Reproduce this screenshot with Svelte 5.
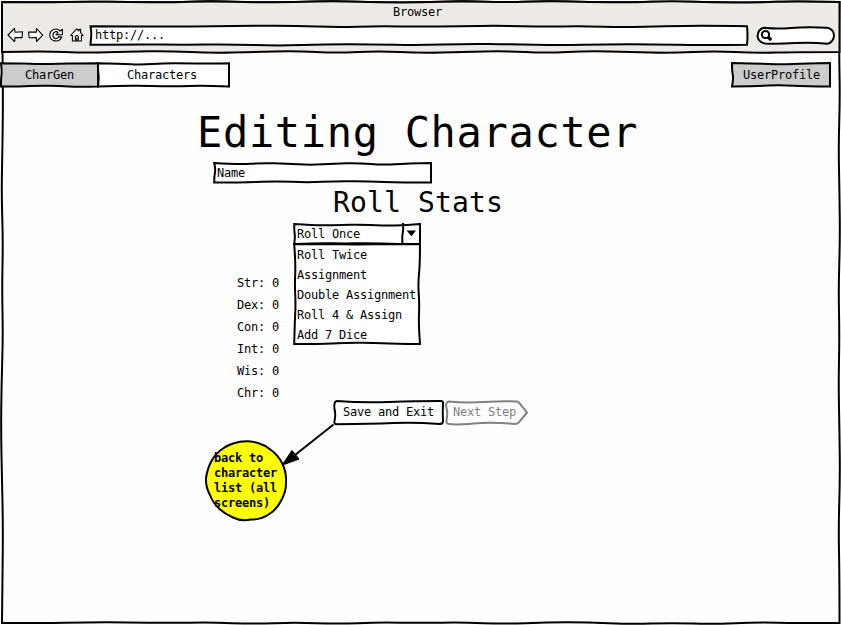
<script>
  // Smooth hand-drawn line: offsets are pushed perpendicular to the segment.
  function side(x1, y1, x2, y2, offsets) {
    const len = Math.hypot(x2 - x1, y2 - y1);
    const nx = -(y2 - y1) / len;
    const ny = (x2 - x1) / len;
    const n = offsets.length + 1;
    const pts = offsets.map((o, i) => {
      const t = (i + 1) / n;
      return [x1 + (x2 - x1) * t + nx * o, y1 + (y2 - y1) * t + ny * o];
    });
    let d = '';
    pts.forEach((p, i) => {
      const q = pts[i + 1];
      const end = q ? [(p[0] + q[0]) / 2, (p[1] + q[1]) / 2] : [x2, y2];
      d += `Q${p[0].toFixed(2)} ${p[1].toFixed(2)} ${end[0].toFixed(2)} ${end[1].toFixed(2)}`;
    });
    return d || `L${x2} ${y2}`;
  }

  function box(x1, y1, x2, y2, top, right, bottom, left) {
    return (
      `M${x1} ${y1}` +
      side(x1, y1, x2, y2 - (y2 - y1), top) +
      side(x2, y1, x2, y2, right) +
      side(x2, y2, x1, y2, bottom) +
      side(x1, y2, x1, y1, left) +
      'Z'
    );
  }

  const longTop = [0.5, -0.5, 0, 0.5, -1, 0.5, 0, -1, 0.5, 0.5, -1, 0.5, -1, 0, 0.5, -1, 0.5, 0.5, -1];
  const longBottom = [0, 0.7, -1, 0, -1, 0.7, 0.7, -1, 0.7, 0, 0.7, -1, 0.7, -1, 0.7, 0, 0.7, 0.7, 0];
  const windowPath = box(2, 2, 839.5, 623, longTop, [0.5, -0.5, 1, 0, -0.5, 1, 0, 1, 0, -0.5, 1, 0], longBottom, [0.5, 1, 0, -1, -0.5, 1, 0, 1, -0.5, 0.5, 1, 0.5]);
  const chromePath = box(2, 2, 839.5, 52, longTop, [0], [0, -1, 1, -1, 0, 1, -1, 1, 0, -1, 1, -1, 1, 0, -1, 1, 0.5, -1, 1], [0]);

  const options = ['Roll Twice', 'Assignment', 'Double Assignment', 'Roll 4 & Assign', 'Add 7 Dice'];
  const stats = ['Str', 'Dex', 'Con', 'Int', 'Wis', 'Chr'];
</script>

{#snippet frame(d, fill = '#fff', stroke = '#000')}
  <svg class="frame" aria-hidden="true"><path {d} {fill} {stroke} stroke-width="2" stroke-linejoin="miter" /></svg>
{/snippet}

<div class="window">
  {@render frame(windowPath, '#fefefe')}
  <header class="chrome">
    {@render frame(chromePath, '#eeebe6')}
    <div class="title">Browser</div>
    <div class="toolbar">
      <svg class="icons" width="82" height="20" viewBox="0 0 82 20" fill="#fff" stroke="#000" stroke-width="1.1" stroke-linejoin="round">
        <path d="M2 10 8.5 3.4 9 7.2 16.5 6.8 16 12.6 9 12.6 8.6 16.6Z" />
        <path d="M36.7 10.2 30.5 3.5 30.3 7.1 22.6 7.1 23.2 12.8 30.3 12.6 30.5 16.5Z" />
        <path d="M54.2 6.2C51 2 43.8 4.3 43.8 10.1C43.8 16.7 53 18.3 55.7 12L53 11.6C51 15.2 46.7 13.8 46.9 9.9C47.1 6.5 50.8 5.8 52.1 7.9L50.1 9.6 56.4 9.8 56.4 4.2Z" />
        <path d="M66.4 10V16H75.4V10M64.6 10.5 70.7 3.9 73 6V4.3H74.6V7.7L77.2 10.5H75.4M64.6 10.5H66.4M69.3 16V11.5Q70.8 9.5 72.3 11.5V16M70.8 12.8V16" />
      </svg>
      <div class="url">
        {@render frame(box(1.5, 1.2, 658, 19.8, [0, 0.5, 0, -0.5, -0.5, 1, 0, 0.5, 0, -0.5, 0.5, 0, 1, 0, -0.5], [-1], [-0.5, 0.5, 0.5, -0.5, 0.5, 1, -0.5, 0.5, 0.5, -1, 0.5, 0, 0.5], [0.5, 1]))}
        http://...
      </div>
      <div class="search">
        <svg class="frame" aria-hidden="true">
          <path d="M8 1.7Q20 3.2 35 2T71 1.7C75.5 2 78 6 78 9.5C78 13 75 17.5 71.5 17.7Q55 16 39 17T9 17.5Q2 16 1.5 10Q2 3 8 1.7Z" fill="#fff" stroke="#000" stroke-width="2" />
          <circle cx="9.5" cy="8.5" r="3.6" fill="#fff" stroke="#000" stroke-width="2" />
          <path d="M11.8 10.8 15.2 14" stroke="#000" stroke-width="3.2" />
        </svg>
      </div>
    </div>
  </header>

  <nav>
    <div class="tab chargen">
      {@render frame(box(1, 1.2, 98, 24.5, [0, 1, 0.5, 0], [0], [-0.5, 0.5, 1, 0], [0, 1]), '#ccc')}
      CharGen
    </div>
    <div class="tab characters">
      {@render frame(box(1, 1.2, 132, 24.5, [0.5, 1.5, 0, 0, 0.5], [0], [1, 0, 0.5, 1], [1, 0]))}
      Characters
    </div>
    <div class="tab profile">
      {@render frame(box(1, 1, 99, 24.5, [0.5, 1.5, 0.5], [0], [0, 1.5, 0.5], [1.5, 0]), '#ccc')}
      UserProfile
    </div>
  </nav>

  <main>
    <h1>Editing Character</h1>
    <div class="name">
      {@render frame(box(1.2, 1, 218, 20.5, [1.5, 0, 0.5, 2, 0.5, 0, 2, 0.5], [0], [0, 1, 1.5, 0, 1.5, 0], [0, 1.5]))}
      Name
    </div>
    <h2>Roll Stats</h2>
    <div class="roll">
      <ul class="stats">
        {#each stats as stat}
          <li>{stat}: 0</li>
        {/each}
      </ul>
      <div class="combo">
        <div class="selected">
          {@render frame(box(1.2, 1, 127, 21, [1.8, 0.5, 1, 2], [0], [0, 1, 0.5, 1], [1, 0]))}
          <span>Roll Once</span>
          <svg class="drop" width="20" height="22" viewBox="0 0 20 22">
            <path d="M2 0Q2.6 5 1.7 10T1.7 22" fill="none" stroke="#000" stroke-width="2" />
            <path d="M5.5 7.5H15L10.5 13.3Z" />
          </svg>
        </div>
        <div class="list">
          {@render frame(box(1.2, 1, 127, 101, [0, 0.5, 0], [0, 2, 0.5, 1.5], [0, 1.5, 1, 0], [0.5, 1.5, 0.5, 1.5]))}
          {#each options as option}
            <div class="option">{option}</div>
          {/each}
        </div>
      </div>
    </div>
    <div class="actions">
      <button class="save">
        {@render frame('M4 1Q28 3 56 2T108 1Q110.5 1 110 4Q109.5 13 110 21Q110 24 107 24Q81 22 60 23T4 24.2Q0.5 24 1.5 21Q3 14 1.5 9Q0.5 1 4 1Z')}
        Save and Exit
      </button>
      <button class="next" disabled>
        {@render frame('M4 1.5Q20 3 39 2T72 1.5Q74 2 76 5L82 12.5 75 21Q73 24 70 24Q48 22 29 23.5T4 24Q1 24 1.5 20Q3 13 1.5 8Q0 2 4 1.5Z', '#fff', '#808080')}
        Next Step
      </button>
    </div>
    <div class="note">
      <svg class="frame" aria-hidden="true">
        <path d="M28 3.5Q41 -0.5 53 3Q60 5 66 10Q73 15 77 23Q81.5 32 81 41Q81.5 51 76.5 60Q72 69 65 73.5Q56 80 46 79.5Q36 81.5 28 77.5Q20 74 14.5 69Q8 63 5 55Q0.5 47 1 38Q2.5 28 6.5 21Q11 13 18 8.5Q23 5 28 3.5Z" fill="#ff0" stroke="#000" stroke-width="2" />
      </svg>
      back to character list (all screens)
    </div>
    <svg class="arrow" width="56" height="46" viewBox="0 0 56 46" aria-hidden="true">
      <path d="M52.5 2.5Q33 18 14 33" fill="none" stroke="#000" stroke-width="2" />
      <path d="M2 42.5 11 29 17.5 37Z" stroke="#000" stroke-width="1.5" stroke-linejoin="round" />
    </svg>
  </main>
</div>

<style>
  :global(body) { margin: 0; background: #fff; }
  .window {
    position: relative;
    width: 841px;
    height: 625px;
    overflow: hidden;
    box-sizing: border-box;
    font: 12px/14px "DejaVu Sans Mono", monospace;
    letter-spacing: -0.225px;
    color: #000;
    isolation: isolate;
  }
  .frame {
    position: absolute;
    inset: 0;
    width: 100%;
    height: 100%;
    overflow: visible;
    z-index: -1;
  }
  .chrome, .url, .search, .tab, .name, .selected, .list, .save, .next, .note { position: relative; isolation: isolate; box-sizing: border-box; }
  .chrome { height: 53px; padding-top: 5px; }
  .title { text-align: center; padding-right: 6px; }
  .toolbar { display: flex; align-items: flex-start; padding: 6px 0 0 6px; }
  .icons { margin-right: 1px; }
  .url { width: 659px; height: 21px; padding: 3px 6px; }
  .search { width: 79px; height: 20px; margin: 1px 0 0 8px; }
  nav { display: flex; padding-top: 9px; }
  .tab { height: 26px; padding-top: 6px; text-align: center; white-space: nowrap; }
  .chargen { width: 98px; padding-left: 1px; }
  .characters { width: 132px; margin-left: -1px; padding-right: 2px; }
  .profile { width: 100px; margin-left: 502px; padding-left: 1px; }
  main { padding-top: 20px; }
  h1, h2 { margin: 0; font-weight: 400; white-space: pre; }
  h1 { font-size: 42px; line-height: 50px; letter-spacing: 0.67px; padding-left: 197px; }
  h2 { font-size: 28px; line-height: 34px; letter-spacing: 0.143px; padding-left: 333px; }
  .name { width: 219px; height: 21px; margin: 4px 0 3px 213px; padding: 4px 4px; }
  .roll { display: flex; height: 177px; margin-top: 3px; padding-left: 237px; }
  ul { list-style: none; margin: 49px 0 0; padding: 0; }
  .stats { width: 56px; }
  .stats li { height: 22px; line-height: 22px; white-space: nowrap; }
  .combo { width: 128px; }
  .selected { height: 21px; padding: 4px; }
  .drop { position: absolute; right: 0; top: 0; }
  .list { height: 102px; margin-top: -1px; padding: 2px 0 0 4px; }
  .option { line-height: 20px; white-space: nowrap; }
  .actions { display: flex; padding-left: 333px; }
  button { font: inherit; letter-spacing: inherit; background: none; border: 0; margin: 0; padding: 0 0 2px; height: 25px; color: #000; white-space: nowrap; }
  .save { width: 111px; }
  .next { width: 84px; margin-left: 1px; padding-right: 5px; color: #808080; }
  .note { width: 83px; height: 81px; margin: 15px 0 0 205px; padding: 11px 9px; font-weight: 700; line-height: 15px; }
  .arrow { position: absolute; left: 281px; top: 422px; }
</style>
